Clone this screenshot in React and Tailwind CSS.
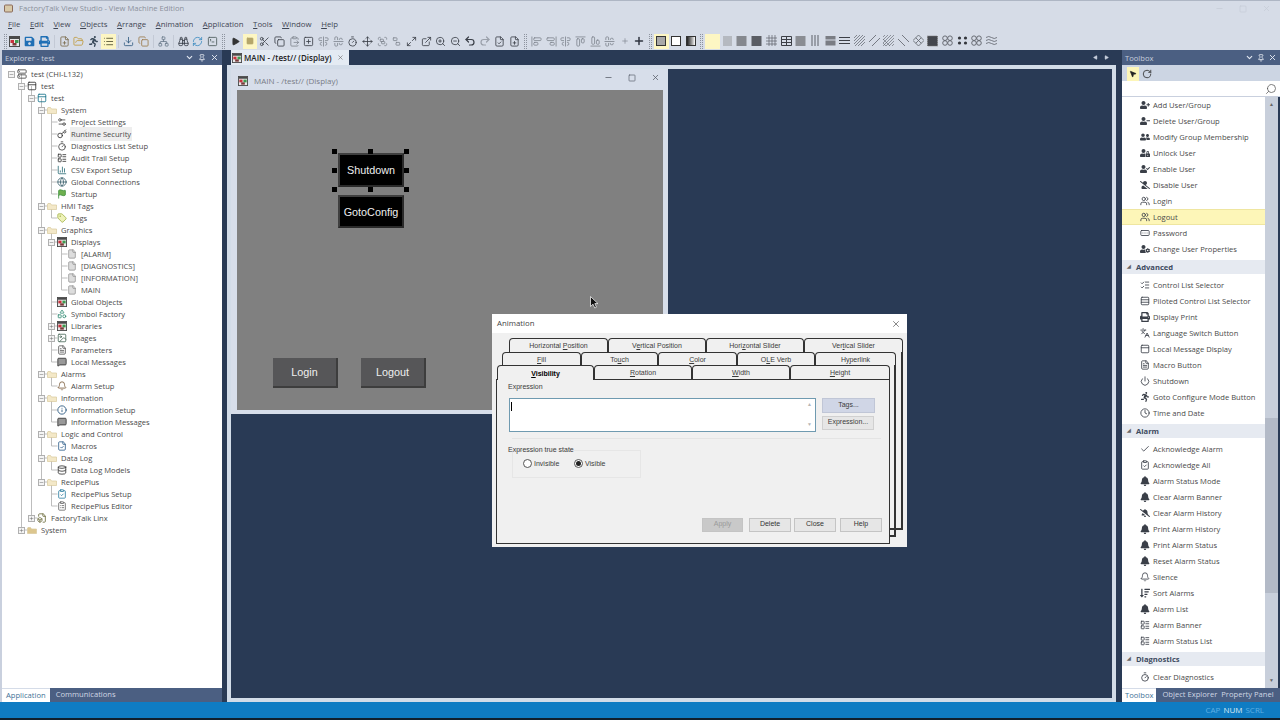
import React from "react";
import {
  AlignCenterHorizontal, AlignCenterVertical, AlignEndHorizontal, AlignEndVertical, AlignStartHorizontal, AlignStartVertical,
  Bell, Binoculars, ChartColumn, Check, ChevronDown, ClipboardCheck, ClipboardList, ClipboardPaste, Clock, Copy,
  Database, Download, ExternalLink, File, FileBox, FileCheck, FilePlus, FileText, Flag, FolderOpen, Globe, Group, Image, Info,
  Key, Languages, LayoutList, List, ListChecks, Maximize2, MessageSquare, Minus, MousePointer2, Move,
  Network, PanelTop, Pin, Play, Plus, Power, RectangleEllipsis, Redo2, RefreshCw, RotateCw,
  Rows3, Scissors, Search, Server, Settings2, Shapes, Square, SquarePlus, SquareTerminal, Tag, Timer, Undo2, Ungroup,
  Users, X, ZoomIn, ZoomOut,
} from "lucide-react";
import {
  FaBell, FaBellSlash, FaPrint, FaRunning, FaSave, FaSortAmountDown, FaUserCheck, FaUserCog, FaUserFriends, FaUserLock,
  FaUserMinus, FaUserPlus, FaUserSlash,
} from "react-icons/fa";

const PANEL = "bg-[#4b5f82]";

// small coloured window icon used for displays
const DisplayIcon = ({ size = 11 }) => (
  <svg width={size} height={size} viewBox="0 0 11 11" className="shrink-0">
    <rect x="0.5" y="0.5" width="10" height="10" fill="#e8e8e8" stroke="#4a4a4a" />
    <rect x="1" y="1" width="9" height="2" fill="#4a4a4a" />
    <rect x="1.5" y="4" width="3.5" height="3" fill="#c8323c" />
    <rect x="6" y="4" width="3.5" height="3" fill="#3f9a4f" />
    <rect x="3.5" y="7" width="4" height="2.5" fill="#7a3a3a" />
  </svg>
);

const FolderIcon = ({ fill = "#f3e8c8" }) => (
  <svg width="10" height="10" viewBox="0 0 10 10" className="shrink-0">
    <path d="M0.5 3 L0.5 8.5 L9.5 8.5 L9.5 4 L4.5 4 L3.5 2.5 L1 2.5 Z" fill={fill} stroke="#d8c89c" strokeWidth="0.7" />
  </svg>
);

const treeIcon = {
  pc: <Server size={10} className="shrink-0 text-[#444]" />,
  app: <PanelTop size={10} className="shrink-0 text-[#333]" />,
  proj: <PanelTop size={10} className="shrink-0 text-[#16728a]" />,
  folder: <FolderIcon />,
  folderSys: <FolderIcon fill="#dcc68e" />,
  settings: <Settings2 size={10} className="shrink-0 text-[#444]" />,
  key: <Key size={10} className="shrink-0 text-[#333]" />,
  timer: <Timer size={10} className="shrink-0 text-[#444]" />,
  audit: <LayoutList size={10} className="shrink-0 text-[#333]" />,
  csv: <ChartColumn size={10} className="shrink-0 text-[#2f6f78]" />,
  globe: <Globe size={10} className="shrink-0 text-[#3e6470]" />,
  flag: <Flag size={10} className="shrink-0 text-[#3f8f3f] fill-[#6fb04f]" />,
  tag: <Tag size={10} className="shrink-0 text-[#a2b24a] fill-[#eef2b8]" />,
  display: <DisplayIcon size={10} />,
  doc: <File size={10} strokeWidth={1.4} className="shrink-0 text-[#777] fill-[#ddd]" />,
  symbol: <Shapes size={10} className="shrink-0 text-[#2f8a72]" />,
  image: <Image size={10} className="shrink-0 text-[#4a6a5a]" />,
  params: <FileText size={10} className="shrink-0 text-[#555]" />,
  msg: <MessageSquare size={10} className="shrink-0 text-[#333] fill-[#999]" />,
  alarm: <Bell size={10} className="shrink-0 text-[#7a5a3a]" />,
  info: <Info size={10} className="shrink-0 text-[#1f4f7a]" />,
  macro: <FileCheck size={10} className="shrink-0 text-[#2f5f8a]" />,
  log: <Database size={10} className="shrink-0 text-[#333]" />,
  recipe: <ClipboardCheck size={10} className="shrink-0 text-[#2f7fa2]" />,
  editor: <ClipboardList size={10} className="shrink-0 text-[#666]" />,
  linx: <FileBox size={10} className="shrink-0 text-[#6a6a3a]" />,
};

// depth, expander ("-", "+" or ""), icon, label
const tree = [
  [0, "-", "pc", "test (CHI-L132)"],
  [1, "-", "app", "test"],
  [2, "-", "proj", "test"],
  [3, "-", "folder", "System"],
  [4, "", "settings", "Project Settings"],
  [4, "", "key", "Runtime Security"],
  [4, "", "timer", "Diagnostics List Setup"],
  [4, "", "audit", "Audit Trail Setup"],
  [4, "", "csv", "CSV Export Setup"],
  [4, "", "globe", "Global Connections"],
  [4, "", "flag", "Startup"],
  [3, "-", "folder", "HMI Tags"],
  [4, "", "tag", "Tags"],
  [3, "-", "folder", "Graphics"],
  [4, "-", "display", "Displays"],
  [5, "", "doc", "[ALARM]"],
  [5, "", "doc", "[DIAGNOSTICS]"],
  [5, "", "doc", "[INFORMATION]"],
  [5, "", "doc", "MAIN"],
  [4, "", "display", "Global Objects"],
  [4, "", "symbol", "Symbol Factory"],
  [4, "+", "display", "Libraries"],
  [4, "+", "image", "Images"],
  [4, "", "params", "Parameters"],
  [4, "", "msg", "Local Messages"],
  [3, "-", "folder", "Alarms"],
  [4, "", "alarm", "Alarm Setup"],
  [3, "-", "folder", "Information"],
  [4, "", "info", "Information Setup"],
  [4, "", "msg", "Information Messages"],
  [3, "-", "folder", "Logic and Control"],
  [4, "", "macro", "Macros"],
  [3, "-", "folder", "Data Log"],
  [4, "", "log", "Data Log Models"],
  [3, "-", "folder", "RecipePlus"],
  [4, "", "recipe", "RecipePlus Setup"],
  [4, "", "editor", "RecipePlus Editor"],
  [2, "+", "linx", "FactoryTalk Linx"],
  [1, "+", "folderSys", "System"],
];

const depthPad = ["pl-[6px]", "pl-[16px]", "pl-[26px]", "pl-[36px]", "pl-[46px]", "pl-[56px]"];

const rowY = (i) => 9 + i * 12;

const TreeLines = () => {
  const lines = [];
  tree.forEach(([depth], i) => {
    if (depth === 0) return;
    let p = i - 1;
    while (tree[p][0] !== depth - 1) p--;
    const x = 9.5 + depth * 10;
    lines.push(<path key={i} d={`M${x} ${rowY(p)} V${rowY(i)} H${x + 6}`} fill="none" stroke="#bdbdbd" />);
  });
  return (
    <svg className="absolute left-0 top-0" width="200" height="540">
      {lines}
    </svg>
  );
};

const TreeRow = ({ depth, exp, icon, label }) => (
  <div className={`relative flex items-center h-[12px] ${depthPad[depth]}`}>
    <span className="w-[7px] h-[7px] mr-[2px] shrink-0">
      {exp && (
        <span className="flex w-[7px] h-[7px] items-center justify-center bg-[#f4f4f4] border border-[#b0b0b0] text-[#555]">
          {exp === "-" ? <Minus size={5} strokeWidth={2} /> : <Plus size={5} strokeWidth={2} />}
        </span>
      )}
    </span>
    {treeIcon[icon]}
    <span className={`ml-[3px] px-[1px] pt-[2px] whitespace-nowrap ${label === "Runtime Security" ? "bg-[#eeeeee]" : ""}`}>{label}</span>
  </div>
);

const HeaderButtons = () => (
  <div className="flex items-center gap-[3px] text-[#e4e9f2]">
    <ChevronDown size={9} strokeWidth={3} />
    <Pin size={8} strokeWidth={2.5} />
    <X size={9} strokeWidth={2.5} />
  </div>
);

const Explorer = () => (
  <div className="w-[224px] shrink-0 flex flex-col border-l-2 border-r-2 border-l-[#c9d0de] border-r-[#293a55]">
    <div className={`h-[15px] shrink-0 flex items-center justify-between pl-[3px] pr-[3px] text-[#c6cedd] ${PANEL}`}>
      <span className="pt-[2px]">Explorer - test</span>
      <div className="flex items-center gap-[4px] text-[#e4e9f2]">
        <ChevronDown size={9} strokeWidth={3} />
        <Pin size={8} strokeWidth={2.5} />
        <X size={9} strokeWidth={2.5} />
      </div>
    </div>
    <div className="relative flex-1 min-h-0 bg-white pt-[3px] text-[#4a4a4a] overflow-hidden">
      <TreeLines />
      {tree.map(([depth, exp, icon, label], i) => (
        <TreeRow key={i} depth={depth} exp={exp} icon={icon} label={label} />
      ))}
    </div>
    <div className={`h-[14px] shrink-0 flex items-center ${PANEL}`}>
      <span className="h-full flex items-center px-[4px] bg-white text-[#3f7296] border-t border-[#d5dce8]">Application</span>
      <span className="ml-[6px] text-[#d0d7e4]">Communications</span>
    </div>
  </div>
);

const Swatch = ({ kind }) => {
  const s = "#5c6068";
  const lines = {
    dots: <rect x="1" y="1" width="9" height="10" fill="#b5b9c0" />,
    gray: <rect x="0.5" y="1" width="10" height="10" fill="#85888e" />,
    dark: <rect x="0.5" y="1" width="10" height="10" fill="#5a5d64" />,
    grid: <path d="M3 0V11M6 0V11M9 0V11M0 3H11M0 6H11M0 9H11" stroke={s} strokeWidth="0.7" />,
    brick: <path d="M0.5 1.5H10.5V10.5H0.5ZM0 4.5H11M0 7.5H11M5.5 1V10" stroke="#3c3f46" fill="none" />,
    stripe: <rect x="0.5" y="1" width="10" height="10" fill="#8a8d93" />,
    vert: <path d="M2 0V11M5 0V11M8 0V11" stroke={s} />,
    block: <path d="M0.5 1H10.5V4.5H0.5ZM0.5 5.5H10.5V10.5H0.5Z" fill="#7a7d84" />,
    horiz: <path d="M0 2.5H11M0 5.5H11M0 8.5H11" stroke="#3c3f46" />,
    hatch: <path d="M0 3L3 0M0 6L6 0M0 9L9 0M1 11L11 1M4 11L11 4M7 11L11 7" stroke={s} strokeWidth="0.7" />,
    diag: <path d="M0 7L7 0M3 11L11 3" stroke={s} strokeWidth="0.8" />,
    hatch2: <path d="M0 2L2 0M0 5L5 0M0 8L8 0M0 11L11 0M3 11L11 3M6 11L11 6M9 11L11 9M0 8L3 11M0 4L7 11" stroke={s} strokeWidth="0.6" />,
    back: <path d="M0 4L7 11M4 0L11 7" stroke={s} strokeWidth="0.8" />,
    cross: <path d="M0 5.5L5.5 0L11 5.5L5.5 11ZM2.75 2.75L8.25 8.25M8.25 2.75L2.75 8.25" stroke={s} fill="none" strokeWidth="0.8" />,
    dense: <rect x="0.5" y="1" width="10" height="10" fill="#44474e" stroke="#777" strokeDasharray="1 1" />,
    rings: (
      <g fill="none" stroke={s} strokeWidth="0.9">
        <circle cx="3" cy="3.2" r="2.3" /><circle cx="8" cy="3.2" r="2.3" /><circle cx="3" cy="8" r="2.3" /><circle cx="8" cy="8" r="2.3" />
      </g>
    ),
    spots: (
      <g fill="#33363c">
        <circle cx="2.5" cy="3" r="1.6" /><circle cx="8.5" cy="3" r="1.6" /><circle cx="2.5" cy="8" r="1.6" /><circle cx="8.5" cy="8" r="1.6" />
      </g>
    ),
    wave: <path d="M0 2.5Q2.7 0.5 5.5 2.5T11 2.5M0 5.5Q2.7 3.5 5.5 5.5T11 5.5M0 8.5Q2.7 6.5 5.5 8.5T11 8.5" stroke={s} fill="none" strokeWidth="0.8" />,
  };
  return (
    <svg width="11" height="12" viewBox="0 0 11 12">
      {lines[kind]}
    </svg>
  );
};

const Tool = ({ children, on }) => (
  <span className={`w-[14.7px] h-[15px] shrink-0 flex items-center justify-center ${on ? "bg-[#fdf6c3]" : ""}`}>{children}</span>
);

const Grip = ({ w = "w-[8.3px]" }) => (
  <span className={`${w} h-[15px] shrink-0 flex justify-center`}>
    <span className="w-[3px] h-full border-x border-dotted border-[#8d939e]" />
  </span>
);

const Sep = () => (
  <span className="w-[5.3px] h-[15px] shrink-0 flex justify-center">
    <span className="w-px h-[13px] mt-px bg-[#c3c9d5]" />
  </span>
);

const ico = (Comp, color, extra = "") => <Comp size={11} strokeWidth={1.8} className={`${color} ${extra}`} />;
const GREY = "text-[#7f858f]";
const DARK = "text-[#3a3f48]";

const Toolbar = () => (
  <div className="h-[17px] shrink-0 flex items-center pl-[3px] pb-[1px]">
    <Grip w="w-[4.6px]" />
    <Tool><DisplayIcon /></Tool>
    <Tool><FaSave size={11} className="text-[#1f6fb5]" /></Tool>
    <Tool><FaPrint size={11} className="text-[#1f6fb5]" /></Tool>
    <Sep />
    <Tool>{ico(FilePlus, "text-[#7a6a4a]")}</Tool>
    <Tool>{ico(FolderOpen, "text-[#c09a3c]")}</Tool>
    <Tool><FaRunning size={11} className="text-[#3a4a5a]" /></Tool>
    <Tool on>{ico(List, "text-[#4a4a2a]")}</Tool>
    <Sep />
    <Tool>{ico(Download, "text-[#2f5a80]")}</Tool>
    <Tool>{ico(Copy, "text-[#9a7a4a]")}</Tool>
    <Sep />
    <Tool>{ico(Network, "text-[#6a7a8a]")}</Tool>
    <Sep />
    <Tool>{ico(Binoculars, "text-[#2f3540]")}</Tool>
    <Tool>{ico(RefreshCw, "text-[#3a8ac0]")}</Tool>
    <Tool>{ico(SquareTerminal, "text-[#4a5a5a]")}</Tool>
    <Grip />
    <Tool><Play size={9} className="text-[#333] fill-[#333]" /></Tool>
    <Tool on><Square size={8} className="text-[#b5a66a] fill-[#b5a66a]" /></Tool>
    <Tool>{ico(Scissors, DARK)}</Tool>
    <Tool>{ico(Copy, DARK)}</Tool>
    <Tool>{ico(ClipboardPaste, GREY)}</Tool>
    <Tool>{ico(SquarePlus, DARK)}</Tool>
    <Tool>{ico(AlignCenterVertical, GREY)}</Tool>
    <Tool>{ico(AlignCenterHorizontal, GREY)}</Tool>
    <Tool>{ico(Timer, DARK)}</Tool>
    <Tool>{ico(Move, DARK)}</Tool>
    <Tool>{ico(Group, GREY)}</Tool>
    <Tool>{ico(Ungroup, GREY)}</Tool>
    <Tool>{ico(Maximize2, DARK)}</Tool>
    <Tool>{ico(ExternalLink, DARK)}</Tool>
    <Tool>{ico(ZoomIn, DARK)}</Tool>
    <Tool>{ico(ZoomOut, DARK)}</Tool>
    <Tool><Undo2 size={12} strokeWidth={2.4} className="text-[#3a3f48]" /></Tool>
    <Tool><Redo2 size={12} strokeWidth={2.4} className="text-[#9aa0aa]" /></Tool>
    <Tool>{ico(FileCheck, DARK)}</Tool>
    <Tool>{ico(FilePlus, DARK)}</Tool>
    <Grip w="w-[7.3px]" />
    <Tool>{ico(AlignStartVertical, GREY)}</Tool>
    <Tool>{ico(AlignEndVertical, GREY)}</Tool>
    <Tool>{ico(AlignCenterVertical, GREY)}</Tool>
    <Tool>{ico(AlignStartHorizontal, GREY)}</Tool>
    <Tool>{ico(AlignEndHorizontal, GREY)}</Tool>
    <Tool>{ico(AlignCenterHorizontal, GREY)}</Tool>
    <Tool><Plus size={8} className="text-[#7f858f]" /></Tool>
    <Tool><Plus size={12} strokeWidth={3} className="text-[#2f3540]" /></Tool>
    <Grip w="w-[7.3px]" />
    <Tool on><span className="w-[10px] h-[10px] bg-[#a8a8a8] border border-[#333]" /></Tool>
    <Tool><span className="w-[10px] h-[10px] bg-white border border-[#333]" /></Tool>
    <Tool><span className="w-[10px] h-[10px] bg-gradient-to-r from-[#222] to-white border border-[#333]" /></Tool>
    <Grip w="w-[7.3px]" />
    <Tool on />
    {["dots", "gray", "dark", "grid", "brick", "stripe", "vert", "block", "horiz", "hatch", "diag", "hatch2", "back", "cross", "dense", "rings", "spots", "rings", "wave"].map((k, i) => (
      <Tool key={i}><Swatch kind={k} /></Tool>
    ))}
  </div>
);

const Handle = ({ className }) => <span className={`absolute w-[5px] h-[5px] bg-black ${className}`} />;

const ChildWindow = () => (
  <div className="absolute left-0 top-0 w-[437px] h-[345px] bg-[#d7deea]">
    <div className="h-[21px] flex items-center pl-[7px] pt-[2px] text-[#777c86]">
      <DisplayIcon size={10} />
      <span className="ml-[6px] text-[8px]">MAIN - /test// (Display)</span>
      <div className="ml-auto flex items-center gap-[15px] pr-[8px] -mt-[6px] text-[#555b66]">
        <Minus size={9} />
        <Square size={8} />
        <X size={9} />
      </div>
    </div>
    <div className="relative ml-[6px] w-[426px] h-[320px] bg-[#808080] font-['Liberation_Sans',sans-serif] text-[10.8px] text-[#efefef]">
      <div className="absolute left-[101px] top-[63px] w-[66px] h-[34px] pt-[1px] flex items-center justify-center bg-black border-2 border-[#3f3f3f] border-r-[#2a2a2a] border-b-[#2a2a2a]">Shutdown</div>
      <div className="absolute left-[101px] top-[105px] w-[66px] h-[33px] pt-[1px] flex items-center justify-center bg-black border-2 border-[#3f3f3f] border-r-[#2a2a2a] border-b-[#2a2a2a]">GotoConfig</div>
      <div className="absolute left-[36px] top-[268px] w-[65px] h-[30px] flex items-center justify-center bg-[#565658] border-r-2 border-b-2 border-[#3d3d3d]">Login</div>
      <div className="absolute left-[124px] top-[268px] w-[65px] h-[30px] flex items-center justify-center bg-[#565658] border-r-2 border-b-2 border-[#3d3d3d]">Logout</div>
      <Handle className="left-[95px] top-[59px]" />
      <Handle className="left-[131px] top-[59px]" />
      <Handle className="left-[167px] top-[59px]" />
      <Handle className="left-[95px] top-[78px]" />
      <Handle className="left-[167px] top-[78px]" />
      <Handle className="left-[95px] top-[97px]" />
      <Handle className="left-[131px] top-[97px]" />
      <Handle className="left-[167px] top-[97px]" />
    </div>
  </div>
);

const Center = () => (
  <div className="flex-1 min-w-0 flex flex-col pl-[3px] pr-[4px]">
    <div className="h-[15px] shrink-0 flex items-center pl-[4px]">
      <div className="h-full w-[118px] flex items-center pl-[1px] bg-[#e4ebf3] text-[#222] font-semibold text-[8px]">
        <DisplayIcon size={10} />
        <span className="ml-[2px] whitespace-nowrap">MAIN - /test// (Display)</span>
        <X size={7} className="ml-auto mr-[5px] text-[#666]" />
      </div>
      <div className="ml-auto flex items-center gap-[6px] pr-[7px] text-[#c9d0de]">
        <Play size={5} className="rotate-180 fill-[#c9d0de]" />
        <Play size={5} className="fill-[#c9d0de]" />
      </div>
    </div>
    <div className="flex-1 min-h-0 border-4 border-[#d2dce8] bg-[#293a55]">
      <div className="relative w-full h-full">
        <ChildWindow />
      </div>
    </div>
  </div>
);

const toolbox = [
  ["row", FaUserPlus, "Add User/Group"],
  ["row", FaUserMinus, "Delete User/Group"],
  ["row", FaUserFriends, "Modify Group Membership"],
  ["row", FaUserLock, "Unlock User"],
  ["row", FaUserCheck, "Enable User"],
  ["row", FaUserSlash, "Disable User"],
  ["row", Users, "Login"],
  ["on", Users, "Logout"],
  ["row", RectangleEllipsis, "Password"],
  ["row", FaUserCog, "Change User Properties"],
  ["head", null, "Advanced"],
  ["row", ListChecks, "Control List Selector"],
  ["row", Rows3, "Piloted Control List Selector"],
  ["row", FaPrint, "Display Print"],
  ["row", Languages, "Language Switch Button"],
  ["row", PanelTop, "Local Message Display"],
  ["row", FileText, "Macro Button"],
  ["row", Power, "Shutdown"],
  ["row", FaRunning, "Goto Configure Mode Button"],
  ["row", Clock, "Time and Date"],
  ["head", null, "Alarm"],
  ["row", Check, "Acknowledge Alarm"],
  ["row", ClipboardCheck, "Acknowledge All"],
  ["row", FaBell, "Alarm Status Mode"],
  ["row", FaBell, "Clear Alarm Banner"],
  ["row", FaBellSlash, "Clear Alarm History"],
  ["row", FaBell, "Print Alarm History"],
  ["row", FaBell, "Print Alarm Status"],
  ["row", FaBell, "Reset Alarm Status"],
  ["row", Bell, "Silence"],
  ["row", FaSortAmountDown, "Sort Alarms"],
  ["row", FaBell, "Alarm List"],
  ["row", LayoutList, "Alarm Banner"],
  ["row", LayoutList, "Alarm Status List"],
  ["head", null, "Diagnostics"],
  ["row", Timer, "Clear Diagnostics"],
];

const Toolbox = () => (
  <div className="w-[160px] shrink-0 flex flex-col pl-[2px]">
    <div className={`h-[15px] shrink-0 flex items-center justify-between pl-[3px] pr-[3px] text-[#c6cedd] ${PANEL}`}>
      <span className="pt-[2px]">Toolbox</span>
      <HeaderButtons />
    </div>
    <div className="h-[16px] shrink-0 flex items-center gap-[3px] pl-[5px] pt-[1px] bg-[#ccd5e3]">
      <span className="w-[12px] h-[14px] flex items-center justify-center bg-[#fdf6b8]">
        <MousePointer2 size={8} className="text-[#222] fill-[#222]" />
      </span>
      <RotateCw size={10} strokeWidth={2} className="text-[#333]" />
    </div>
    <div className="h-[16px] shrink-0 flex items-center justify-end pr-[3px] bg-white border-b border-[#c9d0de]">
      <Search size={12} strokeWidth={1.5} className="-scale-x-100 text-[#555]" />
    </div>
    <div className="flex-1 min-h-0 flex bg-white overflow-hidden">
      <div className="flex-1 min-w-0 text-[#4a4a4a] overflow-hidden">
        {toolbox.map(([type, Icon, label]) =>
          type === "head" ? (
            <div key={label} className="h-[14px] my-[3px] flex items-center pl-[5px] bg-[#e6eaf1] font-bold text-[#3e4a5f]">
              <span className="w-[9px] text-[5px] text-[#666]">◢</span>
              <span className="pt-[2px]">{label}</span>
            </div>
          ) : (
            <div key={label} className={`h-[16px] flex items-center pl-[17px] ${type === "on" ? "bg-[#fdf6b8] border-y border-[#efe6a0]" : ""}`}>
              <Icon size={10} className="shrink-0 mx-[0.5px] text-[#3a3f48]" />
              <span className="ml-[3px] pt-[2px] whitespace-nowrap">{label}</span>
            </div>
          )
        )}
      </div>
      <div className="w-[15px] shrink-0 flex flex-col items-center bg-[#c8cfdb] border-r-2 border-[#293a55]">
        <span className="h-[16px] flex items-center text-[5px] text-[#666]">▲</span>
        <span className="h-[305px]" />
        <span className="h-[175px] w-full bg-[#b3bac7]" />
        <span className="mt-auto h-[14px] flex items-center text-[5px] text-[#666]">▼</span>
      </div>
    </div>
    <div className={`h-[14px] shrink-0 flex items-center whitespace-nowrap text-[#d0d7e4] ${PANEL}`}>
      <span className="h-full flex items-center px-[3px] bg-white text-[#3f7296] border-t border-[#d5dce8]">Toolbox</span>
      <span className="ml-[6px]">Object Explorer</span>
      <span className="ml-[4px]">Property Panel</span>
    </div>
  </div>
);

const DlgTab = ({ label, u, w, active }) => {
  const i = label.indexOf(u);
  return (
    <div
      className={`${w} flex items-center justify-center pt-[2px] bg-[#f0f0f0] border-t border-x border-[#333] rounded-t-[4px] ${
        active ? "h-[14.5px] relative z-10 -mb-px font-bold text-black" : "h-[13.5px]"
      }`}
    >
      <span>
        {label.slice(0, i)}
        <u>{u}</u>
        {label.slice(i + 1)}
      </span>
    </div>
  );
};

const DlgButton = ({ w, children, disabled }) => (
  <div
    className={`${w} h-[14px] flex items-center justify-center border border-[#c4c4c4] ${
      disabled ? "bg-[#c9c9c9] text-[#9a9a9a]" : "bg-[#e6e6e6] text-[#333]"
    }`}
  >
    {children}
  </div>
);

const Radio = ({ checked, label, w }) => (
  <span className={`${w} flex items-center`}>
    <span className="w-[9px] h-[9px] rounded-full bg-white border border-[#555] flex items-center justify-center">
      {checked && <span className="w-[5px] h-[5px] rounded-full bg-[#222]" />}
    </span>
    <span className="ml-[2px]">{label}</span>
  </span>
);

const AnimationDialog = () => (
  <div className="absolute left-[492px] top-[314px] w-[415px] h-[233px] flex flex-col bg-[#f0f0f0] text-[7px] text-[#3c3c3c] font-['Liberation_Sans',sans-serif]">
    <div className="h-[19px] shrink-0 flex items-center justify-between pl-[5px] pr-[6px] bg-white font-['Open_Sans',sans-serif] text-[7.8px] text-[#444]">
      <span>Animation</span>
      <X size={10} strokeWidth={1.4} className="text-[#333]" />
    </div>
    <div className="relative flex-1 pt-[5px]">
      <div className="absolute left-[17px] top-[19px] w-[394px] h-[178px] border-r-2 border-b-2 border-[#333]" />
      <div className="absolute left-[10px] top-[32px] w-[394px] h-[172px] border-r-2 border-b-2 border-[#333]" />
      <div className="relative flex ml-[17px]">
        <DlgTab w="w-[99px]" label="Horizontal Position" u="P" />
        <DlgTab w="w-[98px]" label="Vertical Position" u="e" />
        <DlgTab w="w-[98px]" label="Horizontal Slider" u="z" />
        <DlgTab w="w-[99px]" label="Vertical Slider" u="t" />
      </div>
      <div className="relative flex ml-[10px]">
        <DlgTab w="w-[79px]" label="Fill" u="F" />
        <DlgTab w="w-[77px]" label="Touch" u="u" />
        <DlgTab w="w-[79px]" label="Color" u="C" />
        <DlgTab w="w-[78px]" label="OLE Verb" u="L" />
        <DlgTab w="w-[81px]" label="Hyperlink" u="y" />
      </div>
      <div className="relative flex ml-[5px] items-end">
        <DlgTab w="w-[97px]" label="Visibility" u="V" active />
        <DlgTab w="w-[98px]" label="Rotation" u="R" />
        <DlgTab w="w-[98px]" label="Width" u="W" />
        <DlgTab w="w-[100px]" label="Height" u="H" />
      </div>
      <div className="relative ml-[4px] w-[394px] h-[165px] flex flex-col bg-[#f0f0f0] border border-[#333] pt-[2px]">
        <div className="h-[10px] pl-[11px] leading-[10px]">Expression</div>
        <div className="mt-[6px] flex pl-[12px]">
          <div className="w-[307px] h-[34px] flex justify-between bg-white border border-[#6f9ab0]">
            <span className="ml-[1px] mt-[3px] w-px h-[9px] bg-black" />
            <span className="w-[11px] flex flex-col items-center justify-between text-[5px] text-[#b5b5b5] py-[2px]">
              <span>▲</span>
              <span>▼</span>
            </span>
          </div>
          <div className="ml-[6px] flex flex-col gap-[3px]">
            <div className="w-[53px] h-[15px] flex items-center justify-center bg-[#d0d6e6] border border-[#c0c6d6]">Tags...</div>
            <div className="w-[52px] h-[14px] flex items-center justify-center bg-[#e6e6e6] border border-[#d0d0d0]">Expression...</div>
          </div>
        </div>
        <div className="mt-[6px] ml-[15px] mr-[8px] h-px bg-[#e4e4e4]" />
        <div className="mt-[6px] h-[10px] pl-[11px] leading-[10px] relative z-10">Expression true state</div>
        <div className="-mt-[5px] ml-[15px] w-[129px] h-[28px] pt-[8px] pl-[10px] flex items-start border border-[#e6e6e6]">
          <Radio w="w-[51px]" label="Invisible" />
          <Radio checked label="Visible" />
        </div>
        <div className="mt-auto mb-[11px] pr-[7px] flex justify-end">
          <DlgButton w="w-[41px]" disabled>Apply</DlgButton>
          <div className="ml-[6px]"><DlgButton w="w-[42px]">Delete</DlgButton></div>
          <div className="ml-[3px]"><DlgButton w="w-[42px]">Close</DlgButton></div>
          <div className="ml-[4px]"><DlgButton w="w-[42px]">Help</DlgButton></div>
        </div>
      </div>
    </div>
  </div>
);

const menus = [
  ["F", "ile"], ["E", "dit"], ["V", "iew"], ["O", "bjects"], ["A", "rrange"], ["A", "nimation"],
  ["A", "pplication"], ["T", "ools"], ["W", "indow"], ["H", "elp"],
];

export default function App() {
  return (
    <div className="relative w-[1280px] h-[720px] flex flex-col overflow-hidden bg-[#d6dce7] text-[7.6px] font-['Open_Sans',sans-serif]">
      <div className="h-[16px] shrink-0 flex items-center pl-[4px] border-t border-[#aeb6c4] text-[#8b909b]">
        <svg width="9" height="9" viewBox="0 0 9 9">
          <rect x="0.5" y="1" width="8" height="7" rx="1" fill="#d8c9a8" stroke="#8a6a5a" />
        </svg>
        <span className="ml-[6px]">FactoryTalk View Studio - View Machine Edition</span>
        <div className="ml-auto flex items-center gap-[15px] pr-[9px] text-[#c6ccd7]">
          <Minus size={9} />
          <Square size={8} />
          <X size={9} />
        </div>
      </div>
      <div className="h-[17px] shrink-0 flex items-center gap-[9.6px] pl-[8px] text-[7.8px] text-[#3f4654]">
        {menus.map(([u, rest]) => (
          <span key={u + rest}>
            <u>{u}</u>
            {rest}
          </span>
        ))}
      </div>
      <Toolbar />
      <div className="flex-1 min-h-0 flex bg-[#293a55]">
        <Explorer />
        <Center />
        <Toolbox />
      </div>
      <div className="h-[16px] shrink-0 flex items-center justify-end gap-[3px] pr-[16px] bg-[#0f7cc3] text-[8px] text-[#5fb0e4]">
        <span>CAP</span>
        <span className="text-[#dbe9f4]">NUM</span>
        <span>SCRL</span>
      </div>
      <div className="h-[2px] shrink-0 bg-[#10202e]" />
      <AnimationDialog />
      <svg className="absolute left-[590px] top-[296px]" width="9" height="13" viewBox="0 0 9 13">
        <path d="M0.5 0.5V10.5L3 8.2L4.8 12L6.5 11.2L4.8 7.6H8Z" fill="#111" stroke="#eee" strokeWidth="0.8" />
      </svg>
    </div>
  );
}
